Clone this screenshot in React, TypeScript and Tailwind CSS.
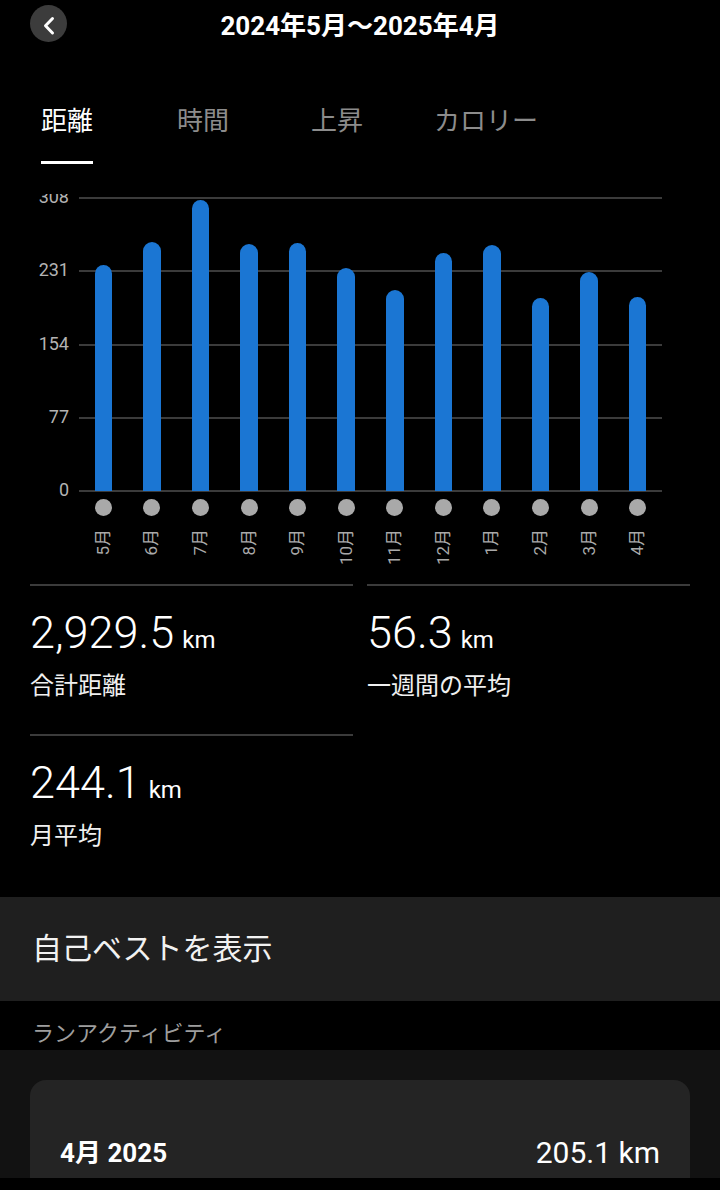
import React from "react";

const FONT = "font-['Roboto','Noto_Sans_CJK_JP',sans-serif]";

const BASE = 297; // zero line inside chart box
const STEP = 73.25;
const PLOT_L = 79;
const PLOT_W = 583;
const SLOT = PLOT_W / 12;
const BAR_W = 17.5;

const months = ["5月", "6月", "7月", "8月", "9月", "10月", "11月", "12月", "1月", "2月", "3月", "4月"];
const heights = [226, 249, 291, 247, 248, 223, 201, 238, 246, 193, 219, 194];
const yLabels = ["0", "77", "154", "231", "308"];

function Chart() {
  return (
    <div className="relative mt-[30px] h-[377px] overflow-hidden">
      {yLabels.map((l, i) => {
        const y = BASE - i * STEP;
        return (
          <React.Fragment key={l}>
            <div
              className="absolute left-0 w-[69px] text-right text-[18px] leading-[20px] text-[#b3b3b3]"
              style={{ top: y - 11 }}
            >
              {l}
            </div>
            <div
              className="absolute h-[2px] bg-[#3b3b3b]"
              style={{ top: y - 1, left: PLOT_L, width: PLOT_W }}
            />
          </React.Fragment>
        );
      })}
      {heights.map((h, i) => {
        const cx = PLOT_L + SLOT * i + SLOT / 2;
        return (
          <React.Fragment key={months[i]}>
            <div
              className="absolute rounded-t-full bg-[#1b76d3]"
              style={{ left: cx - BAR_W / 2, width: BAR_W, top: BASE - h, height: h }}
            />
            <div
              className="absolute h-[17px] w-[17px] rounded-full bg-[#a9a9a9]"
              style={{ left: cx - 8.5, top: BASE + 8 }}
            />
            <div
              className="absolute rotate-180 text-[17px] leading-[17px] text-[#a9a9a9] [writing-mode:vertical-rl] [text-orientation:sideways]"
              style={{ left: cx - 8.5, top: BASE + 38 }}
            >
              {months[i]}
            </div>
          </React.Fragment>
        );
      })}
    </div>
  );
}

function Stat({ value, label }: { value: string; label: string }) {
  return (
    <div className="border-t-2 border-[#3b3b3b] pt-[25px] pb-[36px]">
      <div className="flex items-baseline">
        <span className="text-[45px] leading-[44px] font-light text-white">{value}</span>
        <span className="ml-[8px] text-[24px] leading-[24px] text-white">km</span>
      </div>
      <div className="mt-[19px] text-[24px] leading-[24px] text-[#f0f0f0]">{label}</div>
    </div>
  );
}

export default function App() {
  return (
    <div className={`${FONT} min-h-[1190px] w-[720px] bg-black text-white`}>
      <header className="flex items-start px-[30px] pt-[5px]">
        <button className="flex h-[37px] w-[37px] items-center justify-center rounded-full bg-[#3c3c3c]">
          <svg width="37" height="37" viewBox="0 0 37 37">
            <polyline
              points="22.5,13.5 15.5,20.8 22.5,28"
              fill="none"
              stroke="#fff"
              strokeWidth="3"
              strokeLinecap="round"
              strokeLinejoin="round"
            />
          </svg>
        </button>
        <h1 className="mt-[8px] flex-1 text-center text-[26px] leading-[26px] font-bold">
          2024年5月～2025年4月
        </h1>
        <div className="w-[37px]" />
      </header>

      <nav className="mt-[66px] flex items-center text-[26px] leading-[26px]">
        <span className="ml-[41px] text-white">距離</span>
        <span className="ml-[84px] text-[#8c8c8c]">時間</span>
        <span className="ml-[82px] text-[#8c8c8c]">上昇</span>
        <span className="ml-[71px] text-[#8c8c8c]">カロリー</span>
      </nav>
      <div className="ml-[41px] mt-[27px] h-[3px] w-[52px] bg-white" />

      <Chart />

      <section className="mt-[13px] grid grid-cols-2 gap-x-[14px] px-[30px]">
        <Stat value="2,929.5" label="合計距離" />
        <Stat value="56.3" label="一週間の平均" />
        <Stat value="244.1" label="月平均" />
      </section>

      <div className="mt-[13px] flex h-[104px] items-center bg-[#1f1f1f] px-[32px]">
        <span className="text-[30px] leading-[30px] text-[#f2f2f2]">自己ベストを表示</span>
      </div>

      <div className="flex h-[49px] items-end px-[32px] pb-[5px]">
        <span className="text-[22px] leading-[22px] text-[#9e9e9e]">ランアクティビティ</span>
      </div>

      <div className="h-[128px] overflow-hidden bg-[#121212] px-[30px] pt-[30px]">
        <div className="h-[120px] rounded-[16px] bg-[#242424] px-[30px] pt-[58px]">
          <div className="flex items-center justify-between">
            <span className="text-[26px] leading-[26px] font-bold">4月 2025</span>
            <span className="text-[30px] leading-[30px]">205.1 km</span>
          </div>
        </div>
      </div>
    </div>
  );
}
